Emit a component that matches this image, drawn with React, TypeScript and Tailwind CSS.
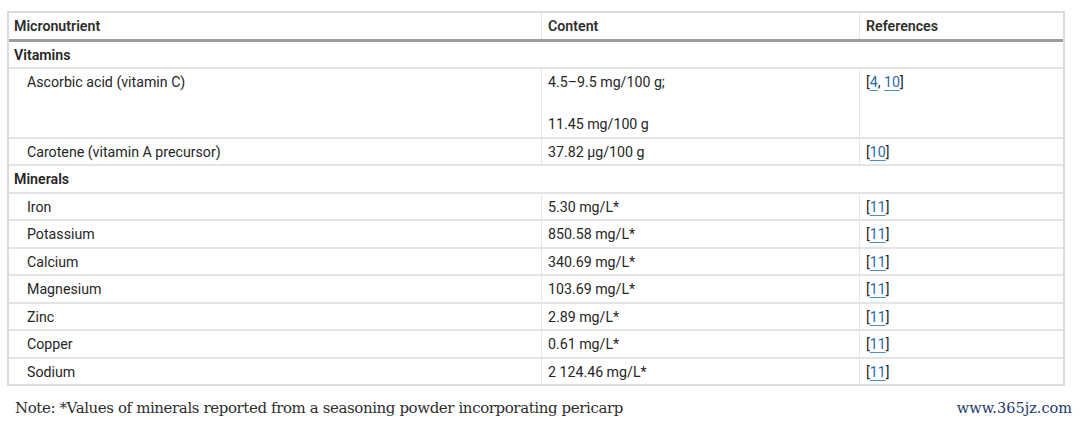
import React from "react";

const sans = { fontFamily: "Roboto, 'Noto Sans', sans-serif" };

type Row = { name: string; content: React.ReactNode; refs: number[]; tall?: boolean };

const vitamins: Row[] = [
  {
    name: "Ascorbic acid (vitamin C)",
    content: (
      <>
        <div>4.5–9.5 mg/100 g;</div>
        <div className="mt-[26.5px]">11.45 mg/100 g</div>
      </>
    ),
    refs: [4, 10],
    tall: true,
  },
  { name: "Carotene (vitamin A precursor)", content: "37.82 µg/100 g", refs: [10] },
];

const minerals: Row[] = [
  { name: "Iron", content: "5.30 mg/L*", refs: [11] },
  { name: "Potassium", content: "850.58 mg/L*", refs: [11] },
  { name: "Calcium", content: "340.69 mg/L*", refs: [11] },
  { name: "Magnesium", content: "103.69 mg/L*", refs: [11] },
  { name: "Zinc", content: "2.89 mg/L*", refs: [11] },
  { name: "Copper", content: "0.61 mg/L*", refs: [11] },
  { name: "Sodium", content: "2 124.46 mg/L*", refs: [11] },
];

function Refs({ refs }: { refs: number[] }) {
  return (
    <span>
      [
      {refs.map((r, i) => (
        <React.Fragment key={r}>
          {i > 0 && ", "}
          <a className="text-[#1f6ca8] underline underline-offset-[3px] decoration-[#4a8fc2]">{r}</a>
        </React.Fragment>
      ))}
      ]
    </span>
  );
}

function DataRow({ row, last }: { row: Row; last?: boolean }) {
  return (
    <div className={`flex ${last ? "" : "border-b-2 border-[#e4e4e4]"}`}>
      <div className="w-[533px] shrink-0 border-r border-[#e6e6e6] pl-[18px] pt-[6px] pb-[4px]">{row.name}</div>
      <div className="w-[318px] shrink-0 border-r border-[#e6e6e6] pl-[6px] pt-[6px] pb-[4px]">{row.content}</div>
      <div className="flex-1 pl-[6px] pt-[6px] pb-[4px]">
        <Refs refs={row.refs} />
      </div>
    </div>
  );
}

function GroupRow({ label }: { label: string }) {
  return (
    <div className="border-b-2 border-[#e4e4e4] pl-[5px] pt-[6px] pb-[4px] font-semibold text-[#262626]">{label}</div>
  );
}

export default function App() {
  return (
    <div className="w-[1080px] h-[426px] bg-white pt-[11px] overflow-hidden">
      <div
        className="ml-[7px] w-[1058px] border-2 border-[#dcdcdc] text-[14.2px] leading-[15.5px] text-[#262626]"
        style={sans}
      >
        <div className="flex border-b-[3px] border-[#9c9c9c] font-semibold text-[#2e2e2e]">
          <div className="w-[533px] shrink-0 border-r border-[#e6e6e6] pl-[5px] pt-[6px] pb-[4px]">Micronutrient</div>
          <div className="w-[318px] shrink-0 border-r border-[#e6e6e6] pl-[6px] pt-[6px] pb-[4px]">Content</div>
          <div className="flex-1 pl-[6px] pt-[6px] pb-[4px]">References</div>
        </div>
        <GroupRow label="Vitamins" />
        {vitamins.map((r) => (
          <DataRow key={r.name} row={r} />
        ))}
        <GroupRow label="Minerals" />
        {minerals.map((r, i) => (
          <DataRow key={r.name} row={r} last={i === minerals.length - 1} />
        ))}
      </div>
      <div className="flex items-baseline justify-between mt-[12px] pl-[15px] pr-[8px]">
        <div
          className="text-[15px] leading-[20px] tracking-[-0.4px] text-[#2e2e2e]"
          style={{ fontFamily: "'DejaVu Serif', 'Liberation Serif', serif" }}
        >
          Note: *Values of minerals reported from a seasoning powder incorporating pericarp
        </div>
        <div
          className="text-[14.5px] leading-[20px] text-[#1f3a6a]"
          style={{ fontFamily: "'DejaVu Serif', serif" }}
        >
          www.365jz.com
        </div>
      </div>
    </div>
  );
}
